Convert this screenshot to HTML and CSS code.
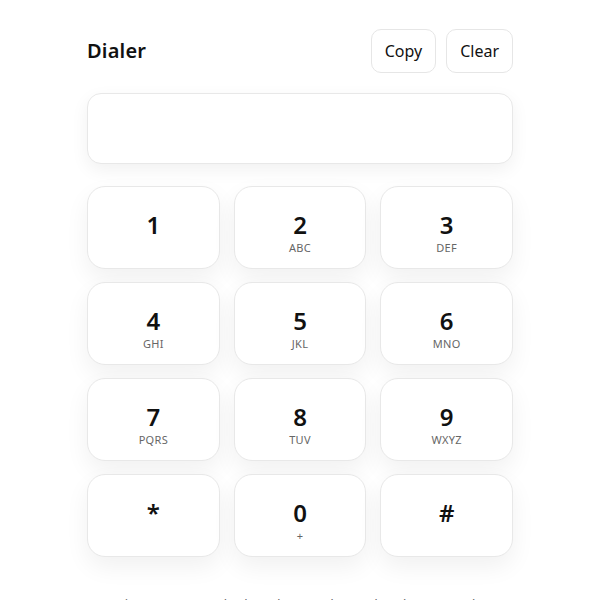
FILE: index.html
```html
<!DOCTYPE html>
<html lang="en">
<head>
<meta charset="utf-8">
<title>Dialer</title>
<link rel="stylesheet" href="styles.css">
</head>
<body>
<main class="dialer">
  <header class="top">
    <h1 class="title">Dialer</h1>
    <div class="actions">
      <button class="btn">Copy</button>
      <button class="btn">Clear</button>
    </div>
  </header>
  <div class="display"></div>
  <div class="pad">
    <button class="key"><span class="digit">1</span><span class="sub"></span></button>
    <button class="key"><span class="digit">2</span><span class="sub">ABC</span></button>
    <button class="key"><span class="digit">3</span><span class="sub">DEF</span></button>
    <button class="key"><span class="digit">4</span><span class="sub">GHI</span></button>
    <button class="key"><span class="digit">5</span><span class="sub">JKL</span></button>
    <button class="key"><span class="digit">6</span><span class="sub">MNO</span></button>
    <button class="key"><span class="digit">7</span><span class="sub">PQRS</span></button>
    <button class="key"><span class="digit">8</span><span class="sub">TUV</span></button>
    <button class="key"><span class="digit">9</span><span class="sub">WXYZ</span></button>
    <button class="key"><span class="digit">*</span><span class="sub"></span></button>
    <button class="key"><span class="digit">0</span><span class="sub">+</span></button>
    <button class="key"><span class="digit">#</span><span class="sub"></span></button>
  </div>
  <p class="hint">Tip: type on your keyboard — 0–9, *, # and Backspace work.</p>
</main>
</body>
</html>
```
FILE: styles.css
```css
* { box-sizing: border-box; }
html, body { margin: 0; padding: 0; background: #ffffff; }
body {
  font-family: "Noto Sans", "Open Sans", sans-serif;
  color: #111;
}
.dialer {
  width: 426px;
  margin: 0 auto;
  padding-top: 28px;
}
.top {
  display: flex;
  align-items: center;
  justify-content: space-between;
  height: 45px;
}
.title {
  margin: 0;
  font-size: 20px;
  font-weight: 600;
  letter-spacing: 0.2px;
}
.actions { display: flex; gap: 10px; }
.btn {
  font-family: inherit;
  font-size: 16px;
  color: #111;
  background: #fff;
  border: 1px solid #e6e6e6;
  border-radius: 10px;
  height: 44px;
  padding: 0 13px;
}
.display {
  margin-top: 20px;
  height: 71px;
  border: 1px solid #e8e8e8;
  border-radius: 14px;
  background: #fff;
  box-shadow: 0 6px 18px rgba(0,0,0,0.06);
}
.pad {
  margin-top: 22px;
  display: grid;
  grid-template-columns: repeat(3, 1fr);
  gap: 13px 14px;
}
.key {
  height: 83px;
  font-family: inherit;
  background: #fff;
  border: 1px solid #e8e8e8;
  border-radius: 18px;
  box-shadow: 0 10px 24px rgba(0,0,0,0.06);
  display: grid;
  grid-template-rows: 1fr auto 1fr;
  justify-items: center;
  padding: 0 0 5px;
}
.digit {
  grid-row: 2;
  font-size: 24px;
  font-weight: 600;
  line-height: 28px;
  color: #111;
}
.sub {
  grid-row: 3;
  align-self: start;
  font-size: 11px;
  line-height: 14px;
  color: #666;
  letter-spacing: 0.3px;
  margin-top: 2px;
}
.hint {
  margin: 38px 0 0;
  text-align: center;
  font-size: 13px;
  color: #666;
}
```
